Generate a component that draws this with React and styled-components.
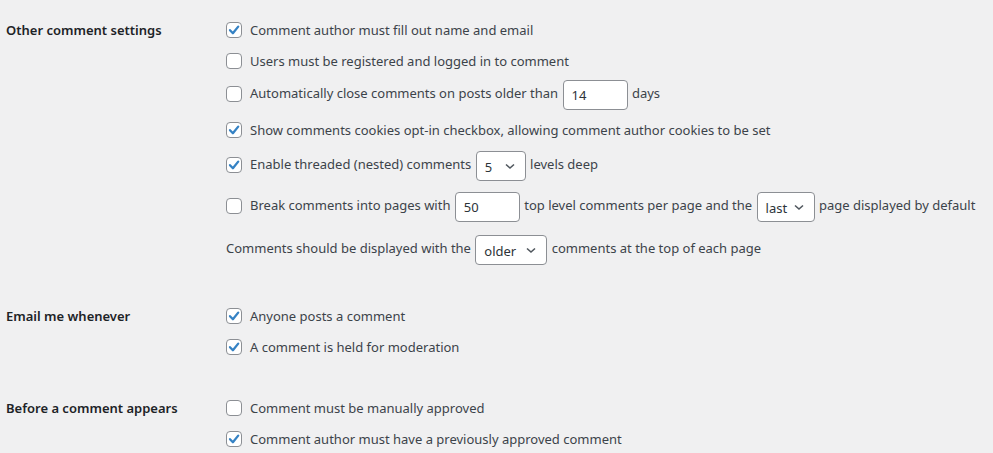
import React from "react";
import styled, { createGlobalStyle } from "styled-components";

const Global = createGlobalStyle`
  html, body { margin: 0; padding: 0; background: #f0f0f1; }
  body { font-family: "Noto Sans", "Open Sans", sans-serif; font-size: 13px; color: #3c434a; }
`;

const Page = styled.div`
  padding: 14px 0 0 6px;
  display: flex;
  flex-direction: column;
`;

const Section = styled.div`
  display: grid;
  grid-template-columns: 220px 1fr;
  margin-top: ${(p) => p.$mt || 0}px;
`;

const Heading = styled.div`
  height: 31px;
  display: flex;
  align-items: center;
  font-weight: 600;
  font-size: 13px;
  color: #1d2327;
`;

const Fieldset = styled.div`
  display: flex;
  flex-direction: column;
`;

const Line = styled.div`
  height: ${(p) => p.$h || 31}px;
  display: flex;
  align-items: center;
  white-space: nowrap;
`;

const Box = styled.span`
  width: 16px;
  height: 16px;
  box-sizing: border-box;
  border: 1px solid #8c8f94;
  border-radius: 4px;
  background: #fff;
  margin-right: 8px;
  flex: none;
  display: flex;
  align-items: center;
  justify-content: center;
`;

const Text = styled.span`
  line-height: 30px;
`;

const NumInput = styled.input`
  width: 65px;
  height: 30px;
  box-sizing: border-box;
  border: 1px solid #8c8f94;
  border-radius: 4px;
  background: #fff;
  padding: 0 8px;
  margin: 0 1px;
  font: inherit;
  color: #2c3338;
  vertical-align: middle;
  outline: none;
`;

const SelectWrap = styled.span`
  position: relative;
  display: inline-block;
  vertical-align: middle;
  margin: 0 1px;
`;

const Select = styled.select`
  appearance: none;
  -webkit-appearance: none;
  width: ${(p) => p.$w}px;
  height: 30px;
  box-sizing: border-box;
  border: 1px solid #8c8f94;
  border-radius: 4px;
  background: #fff;
  padding: 0 24px 0 8px;
  font: inherit;
  color: #2c3338;
  display: block;
  outline: none;
`;

const Chevron = styled.svg`
  position: absolute;
  right: 8px;
  top: 50%;
  margin-top: -8px;
  pointer-events: none;
`;

const Check = ({ on }) => (
  <Box>
    {on && (
      <svg width="14" height="14" viewBox="0 0 14 14">
        <path d="M3 7.2 L5.9 10.2 L11.2 3.6" fill="none" stroke="#3582c4" strokeWidth="2.3" strokeLinecap="round" strokeLinejoin="round" />
      </svg>
    )}
  </Box>
);

const Sel = ({ w, value, options }) => (
  <SelectWrap>
    <Select $w={w} defaultValue={value}>
      {options.map((o) => (
        <option key={o}>{o}</option>
      ))}
    </Select>
    <Chevron width="16" height="16" viewBox="0 0 16 16">
      <path d="M4 6.5 L8 10 L12 6.5" fill="none" stroke="#50575e" strokeWidth="1.6" />
    </Chevron>
  </SelectWrap>
);

export default function App() {
  return (
    <>
      <Global />
      <Page>
        <Section>
          <Heading>Other comment settings</Heading>
          <Fieldset>
            <Line>
              <Check on />
              <Text>Comment author must fill out name and email</Text>
            </Line>
            <Line>
              <Check />
              <Text>Users must be registered and logged in to comment</Text>
            </Line>
            <Line $h={36}>
              <Check />
              <Text>
                Automatically close comments on posts older than <NumInput defaultValue="14" /> days
              </Text>
            </Line>
            <Line $h={36}>
              <Check on />
              <Text>Show comments cookies opt-in checkbox, allowing comment author cookies to be set</Text>
            </Line>
            <Line $h={34}>
              <Check on />
              <Text>
                Enable threaded (nested) comments <Sel w={50} value="5" options={["2", "3", "4", "5", "6", "7", "8", "9", "10"]} /> levels deep
              </Text>
            </Line>
            <Line $h={48}>
              <Check />
              <Text>
                Break comments into pages with <NumInput defaultValue="50" /> top level comments per page and the{" "}
                <Sel w={58} value="last" options={["last", "first"]} /> page displayed by default
              </Text>
            </Line>
            <Line $h={38}>
              <Text>
                Comments should be displayed with the <Sel w={72} value="older" options={["older", "newer"]} /> comments at the top of each page
              </Text>
            </Line>
          </Fieldset>
        </Section>
        <Section $mt={32}>
          <Heading>Email me whenever</Heading>
          <Fieldset>
            <Line>
              <Check on />
              <Text>Anyone posts a comment</Text>
            </Line>
            <Line>
              <Check on />
              <Text>A comment is held for moderation</Text>
            </Line>
          </Fieldset>
        </Section>
        <Section $mt={30}>
          <Heading>Before a comment appears</Heading>
          <Fieldset>
            <Line>
              <Check />
              <Text>Comment must be manually approved</Text>
            </Line>
            <Line>
              <Check on />
              <Text>Comment author must have a previously approved comment</Text>
            </Line>
          </Fieldset>
        </Section>
      </Page>
    </>
  );
}
